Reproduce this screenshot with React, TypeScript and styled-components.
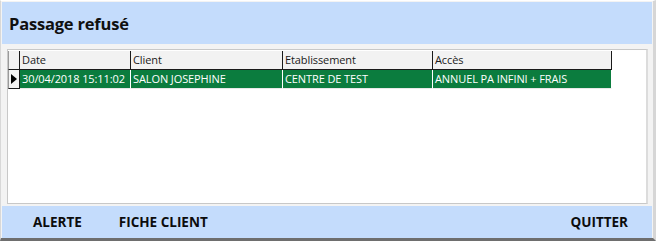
import React from "react";
import styled, { createGlobalStyle } from "styled-components";

const Global = createGlobalStyle`
  html, body { margin: 0; padding: 0; background: #f0f0f0; }
  body { font-family: "Open Sans", "Noto Sans", sans-serif; }
`;

const Window = styled.div`
  width: 656px;
  height: 241px;
  box-sizing: border-box;
  background: #f3f3f3;
  border-top: 1px solid #ffffff;
  border-left: 1px solid #d8d8d8;
  border-right: 3px solid #d6d6d6;
  border-bottom: 3px solid #6e6e6e;
  display: flex;
  flex-direction: column;
  padding: 1px 1px 0 1px;
`;

const Header = styled.div`
  height: 42px;
  background: #c4dcfc;
  display: flex;
  align-items: center;
  padding-left: 7px;
  font-size: 16.5px;
  font-weight: 700;
  color: #101010;
  letter-spacing: -0.2px;
`;

const GridArea = styled.div`
  flex: 1;
  display: flex;
  padding: 5px 4px 2px 5px;
`;

const Grid = styled.div`
  flex: 1;
  background: #ffffff;
  border: 1px solid #c8c8c8;
  border-right: 2px solid #dcdcdc;
  padding: 1px 0 0 0;
  display: flex;
  flex-direction: column;
`;

const Row = styled.div`
  display: grid;
  grid-template-columns: 12px 111px 152px 150px 179px;
  height: 19px;
`;

const Cell = styled.div<{ $head?: boolean }>`
  box-sizing: border-box;
  border-right: 1px solid ${(p) => (p.$head ? "#1a1a1a" : "#ffffff")};
  border-bottom: 1px solid ${(p) => (p.$head ? "#1a1a1a" : "#e8e8e8")};
  background: ${(p) => (p.$head ? "#f2f2f2" : "#0b7c3e")};
  color: ${(p) => (p.$head ? "#1a1a1a" : "#ffffff")};
  font-size: 11px;
  line-height: 18px;
  padding-left: 2px;
  white-space: nowrap;
  overflow: hidden;
  letter-spacing: -0.1px;
`;

const Selector = styled.div`
  box-sizing: border-box;
  background: #f2f2f2;
  border-right: 1px solid #1a1a1a;
  border-bottom: 1px solid #1a1a1a;
  border-left: 1px solid #9a9a9a;
  display: flex;
  align-items: center;
  justify-content: center;
`;

const Footer = styled.div`
  height: 32px;
  background: #c4dcfc;
  display: flex;
  align-items: center;
  font-size: 13.5px;
  font-weight: 700;
  color: #0c0c0c;
  letter-spacing: 0;
`;

const Btn = styled.div<{ $ml?: number; $mr?: number }>`
  margin-left: ${(p) => p.$ml ?? 0}px;
  margin-right: ${(p) => p.$mr ?? 0}px;
`;

const Spacer = styled.div`
  flex: 1;
`;

export default function App() {
  return (
    <>
      <Global />
      <Window>
        <Header>Passage refusé</Header>
        <GridArea>
          <Grid>
            <Row>
              <Selector />
              <Cell $head>Date</Cell>
              <Cell $head>Client</Cell>
              <Cell $head>Etablissement</Cell>
              <Cell $head>Accès</Cell>
            </Row>
            <Row>
              <Selector>
                <svg width="6" height="10" viewBox="0 0 6 10">
                  <path d="M0 0 L6 5 L0 10 Z" fill="#000" />
                </svg>
              </Selector>
              <Cell>30/04/2018 15:11:02</Cell>
              <Cell>SALON JOSEPHINE</Cell>
              <Cell>CENTRE DE TEST</Cell>
              <Cell>ANNUEL PA INFINI + FRAIS</Cell>
            </Row>
          </Grid>
        </GridArea>
        <Footer>
          <Btn $ml={31}>ALERTE</Btn>
          <Btn $ml={37}>FICHE CLIENT</Btn>
          <Spacer />
          <Btn $mr={24}>QUITTER</Btn>
        </Footer>
      </Window>
    </>
  );
}
